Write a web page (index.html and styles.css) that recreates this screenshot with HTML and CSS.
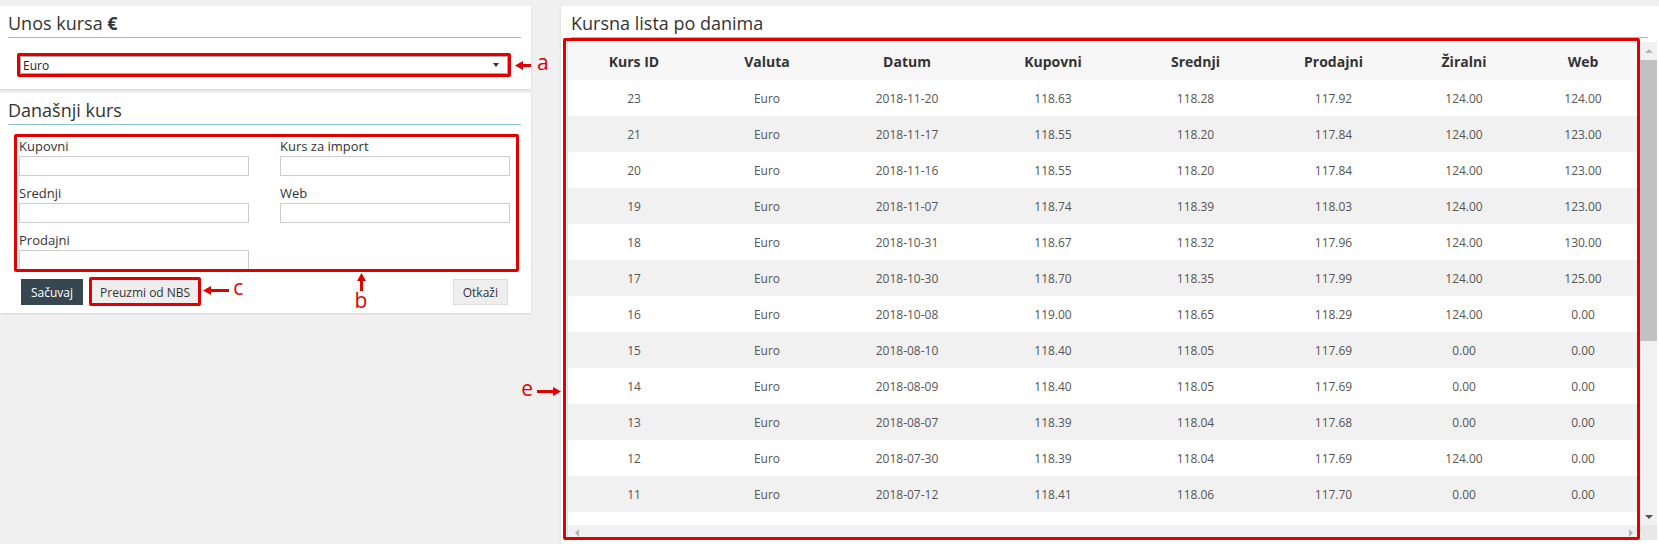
FILE: index.html
```html
<!DOCTYPE html>
<html lang="sr">
<head>
    <meta charset="UTF-8">
    <meta name="viewport" content="width=device-width, initial-scale=1.0">
    <title>Kursna lista</title>
    <link rel="stylesheet" href="styles.css">
</head>
<body>
    <div class="layout">
        <div class="side">
            <section class="panel">
                <h2 class="panel-title">Unos kursa <b>€</b></h2>
                <div class="currency-body">
                    <div class="marked">
                        <div class="select-box">
                            <span>Euro</span>
                            <span class="caret"></span>
                        </div>
                        <span class="mark"></span>
                        <span class="callout callout-right">
                            <svg width="16" height="9" viewBox="0 0 16 9"><path d="M16 4.5H6" stroke="#e00000" stroke-width="3"/><path d="M0 4.5L8 0V9Z" fill="#e00000"/></svg>
                            <span class="callout-letter">a</span>
                        </span>
                    </div>
                </div>
            </section>

            <section class="panel">
                <h2 class="panel-title">Današnji kurs</h2>
                <div class="rate-body">
                    <div class="marked rate-form">
                        <div class="form-grid">
                            <label class="field">Kupovni<input type="text"></label>
                            <label class="field">Kurs za import<input type="text"></label>
                            <label class="field">Srednji<input type="text"></label>
                            <label class="field">Web<input type="text"></label>
                            <label class="field">Prodajni<input type="text"></label>
                        </div>
                        <span class="mark mark-flush"></span>
                        <span class="callout callout-below">
                            <svg width="9" height="18" viewBox="0 0 9 18"><path d="M4.5 18V7" stroke="#e00000" stroke-width="3"/><path d="M4.5 0L9 8H0Z" fill="#e00000"/></svg>
                            <span class="callout-letter">b</span>
                        </span>
                    </div>

                    <div class="actions">
                        <button class="btn btn-dark">Sačuvaj</button>
                        <div class="marked">
                            <button class="btn">Preuzmi od NBS</button>
                            <span class="mark mark-btn"></span>
                            <span class="callout callout-right callout-long">
                                <svg width="26" height="9" viewBox="0 0 26 9"><path d="M26 4.5H6" stroke="#e00000" stroke-width="3"/><path d="M0 4.5L8 0V9Z" fill="#e00000"/></svg>
                                <span class="callout-letter">c</span>
                            </span>
                        </div>
                        <button class="btn btn-cancel">Otkaži</button>
                    </div>
                </div>
            </section>
        </div>

        <section class="panel panel-wide">
            <h2 class="panel-title">Kursna lista po danima</h2>
            <div class="marked grid-wrap">
                <div class="table-frame">
                    <div class="table-viewport">
                        <table class="rates">
                            <colgroup>
                                <col style="width: 132px">
                                <col style="width: 134px">
                                <col style="width: 146px">
                                <col style="width: 146px">
                                <col style="width: 139px">
                                <col style="width: 137px">
                                <col style="width: 124px">
                                <col style="width: 114px">
                            </colgroup>
                            <thead>
                                <tr>
                                    <th>Kurs ID</th>
                                    <th>Valuta</th>
                                    <th>Datum</th>
                                    <th>Kupovni</th>
                                    <th>Srednji</th>
                                    <th>Prodajni</th>
                                    <th>Žiralni</th>
                                    <th>Web</th>
                                </tr>
                            </thead>
                            <tbody>
                                <tr><td>23</td><td>Euro</td><td>2018-11-20</td><td>118.63</td><td>118.28</td><td>117.92</td><td>124.00</td><td>124.00</td></tr>
                                <tr><td>21</td><td>Euro</td><td>2018-11-17</td><td>118.55</td><td>118.20</td><td>117.84</td><td>124.00</td><td>123.00</td></tr>
                                <tr><td>20</td><td>Euro</td><td>2018-11-16</td><td>118.55</td><td>118.20</td><td>117.84</td><td>124.00</td><td>123.00</td></tr>
                                <tr><td>19</td><td>Euro</td><td>2018-11-07</td><td>118.74</td><td>118.39</td><td>118.03</td><td>124.00</td><td>123.00</td></tr>
                                <tr><td>18</td><td>Euro</td><td>2018-10-31</td><td>118.67</td><td>118.32</td><td>117.96</td><td>124.00</td><td>130.00</td></tr>
                                <tr><td>17</td><td>Euro</td><td>2018-10-30</td><td>118.70</td><td>118.35</td><td>117.99</td><td>124.00</td><td>125.00</td></tr>
                                <tr><td>16</td><td>Euro</td><td>2018-10-08</td><td>119.00</td><td>118.65</td><td>118.29</td><td>124.00</td><td>0.00</td></tr>
                                <tr><td>15</td><td>Euro</td><td>2018-08-10</td><td>118.40</td><td>118.05</td><td>117.69</td><td>0.00</td><td>0.00</td></tr>
                                <tr><td>14</td><td>Euro</td><td>2018-08-09</td><td>118.40</td><td>118.05</td><td>117.69</td><td>0.00</td><td>0.00</td></tr>
                                <tr><td>13</td><td>Euro</td><td>2018-08-07</td><td>118.39</td><td>118.04</td><td>117.68</td><td>0.00</td><td>0.00</td></tr>
                                <tr><td>12</td><td>Euro</td><td>2018-07-30</td><td>118.39</td><td>118.04</td><td>117.69</td><td>124.00</td><td>0.00</td></tr>
                                <tr><td>11</td><td>Euro</td><td>2018-07-12</td><td>118.41</td><td>118.06</td><td>117.70</td><td>0.00</td><td>0.00</td></tr>
                            </tbody>
                        </table>
                    </div>
                    <div class="vscroll">
                        <span class="sb-btn"><span class="tri tri-up"></span></span>
                        <span class="sb-track"><span class="sb-thumb"></span></span>
                        <span class="sb-btn"><span class="tri tri-down"></span></span>
                    </div>
                    <div class="hscroll">
                        <span class="sb-btn"><span class="tri tri-left"></span></span>
                        <span class="sb-btn"><span class="tri tri-right"></span></span>
                    </div>
                    <div class="corner"></div>
                </div>
                <span class="mark mark-table"></span>
                <span class="callout callout-left">
                    <span class="callout-letter">e</span>
                    <svg width="24" height="9" viewBox="0 0 24 9"><path d="M0 4.5H18" stroke="#e00000" stroke-width="3"/><path d="M24 4.5L16 0V9Z" fill="#e00000"/></svg>
                </span>
            </div>
        </section>
    </div>
</body>
</html>
```

FILE: styles.css
```css
* {
    margin: 0;
    padding: 0;
    box-sizing: border-box;
}

body {
    font-family: 'Open Sans', 'DejaVu Sans', sans-serif;
    background: #f0f0f0;
    color: #333;
    overflow: hidden;
}

.layout {
    display: flex;
    gap: 30px;
    height: 100vh;
    padding-top: 6px;
}

.side {
    width: 531px;
    flex-shrink: 0;
    display: flex;
    flex-direction: column;
    gap: 4px;
    align-self: flex-start;
}

.panel {
    background: #fff;
    padding: 0 10px 0 8px;
    box-shadow: 0 1px 2px rgba(0, 0, 0, 0.12);
}

.panel-title {
    font-size: 18px;
    font-weight: 400;
    line-height: 26px;
    padding: 4px 0 1px;
    border-bottom: 1px solid #8cc3cf;
    color: #333;
}

.panel-title b {
    font-weight: 700;
}

/* red review marks drawn over the screen */
.marked {
    position: relative;
}

.mark {
    position: absolute;
    inset: -3px;
    border: 3px solid #e00000;
    border-radius: 2px;
    pointer-events: none;
}

.mark-flush { inset: 0; }
.mark-btn { inset: -2px -1px -1px -1px; }
.mark-table { inset: -4px 17px 0 -4px; }

.callout {
    position: absolute;
    display: flex;
    align-items: center;
    gap: 6px;
    color: #e00000;
}

.callout svg {
    display: block;
}

.callout-letter {
    font-size: 21px;
    line-height: 20px;
    color: #e00000;
    position: relative;
    top: -3px;
}

.callout-right {
    left: calc(100% + 7px);
    top: 50%;
    transform: translateY(-50%);
}

.callout-long {
    left: calc(100% + 3px);
    top: 50%;
    gap: 4px;
    margin-top: -2px;
}

.callout-below {
    flex-direction: column;
    gap: 0;
    top: calc(100% + 1px);
    left: 339px;
    width: 16px;
}

.callout-below .callout-letter {
    top: -1px;
}

.callout-left {
    right: calc(100% + 6px);
    top: 339px;
    gap: 4px;
}

/* currency picker */
.currency-body {
    padding: 18px 13px 15px 12px;
}

.select-box {
    height: 18px;
    border: 1px solid #aaa;
    background: #fff;
    display: flex;
    align-items: center;
    justify-content: space-between;
    padding: 0 8px 0 2px;
    font-size: 12px;
    color: #222;
}

.caret {
    border-left: 3px solid transparent;
    border-right: 3px solid transparent;
    border-top: 4px solid #333;
}

/* today's rate form */
.rate-body {
    padding: 9px 0 8px;
}

.rate-form {
    margin: 0 2px 0 6px;
    padding: 3px 9px 2px 5px;
}

.form-grid {
    display: grid;
    grid-template-columns: 1fr 1fr;
    column-gap: 31px;
    row-gap: 8px;
}

.field {
    display: flex;
    flex-direction: column;
    font-size: 13px;
    line-height: 19px;
    color: #333;
}

.field input {
    height: 20px;
    border: 1px solid #ccc;
    font: inherit;
    font-size: 12px;
    padding: 0 4px;
}

.actions {
    display: flex;
    align-items: center;
    gap: 7px;
    margin-top: 7px;
    padding: 0 13px;
}

.btn {
    height: 26px;
    padding: 0 9px;
    font-family: inherit;
    font-size: 12px;
    color: #333;
    background: #eee;
    border: 1px solid #ddd;
    border-radius: 0;
    cursor: pointer;
}

.btn-dark {
    background: #37474f;
    border-color: #37474f;
    color: #fff;
}

.btn-cancel {
    margin-left: auto;
}

/* rates table */
.panel-wide {
    flex: 1;
    display: flex;
    flex-direction: column;
    padding: 0 2px 4px 6px;
}

.panel-wide .panel-title {
    margin: 0 9px 0 4px;
}

.grid-wrap {
    flex: 1;
    margin-top: 4px;
    min-height: 0;
}

.table-frame {
    height: 100%;
    display: grid;
    grid-template-columns: 1fr 17px;
    grid-template-rows: 1fr 15px;
    border-left: 1px solid #ddd;
    background: #fff;
}

.table-viewport {
    overflow: hidden;
    min-height: 0;
}

.rates {
    width: 100%;
    table-layout: fixed;
    border-collapse: collapse;
}

.rates th {
    height: 38px;
    background: #f7f7f7;
    font-size: 14px;
    font-weight: 700;
    color: #333;
    text-align: center;
}

.rates td {
    height: 36px;
    font-size: 12px;
    color: #555;
    text-align: center;
}

.rates tbody tr:nth-child(even) {
    background: #f1f1f1;
}

.vscroll {
    display: flex;
    flex-direction: column;
    background: #f1f1f1;
}

.hscroll {
    display: flex;
    justify-content: space-between;
    background: #f1f1f1;
}

.sb-btn {
    width: 17px;
    height: 17px;
    display: flex;
    align-items: center;
    justify-content: center;
    flex-shrink: 0;
}

.hscroll .sb-btn {
    width: 18px;
    height: 15px;
}

.sb-track {
    flex: 1;
}

.sb-thumb {
    display: block;
    height: 281px;
    margin-top: 1px;
    background: #c1c1c1;
}

.corner {
    background: #e8e8e8;
}

.tri {
    width: 0;
    height: 0;
}

.tri-up {
    border-left: 4px solid transparent;
    border-right: 4px solid transparent;
    border-bottom: 4px solid #b4b4b4;
}

.tri-down {
    border-left: 4px solid transparent;
    border-right: 4px solid transparent;
    border-top: 4px solid #505050;
}

.tri-left {
    border-top: 4px solid transparent;
    border-bottom: 4px solid transparent;
    border-right: 4px solid #b4b4b4;
}

.tri-right {
    border-top: 4px solid transparent;
    border-bottom: 4px solid transparent;
    border-left: 4px solid #b4b4b4;
}
```
